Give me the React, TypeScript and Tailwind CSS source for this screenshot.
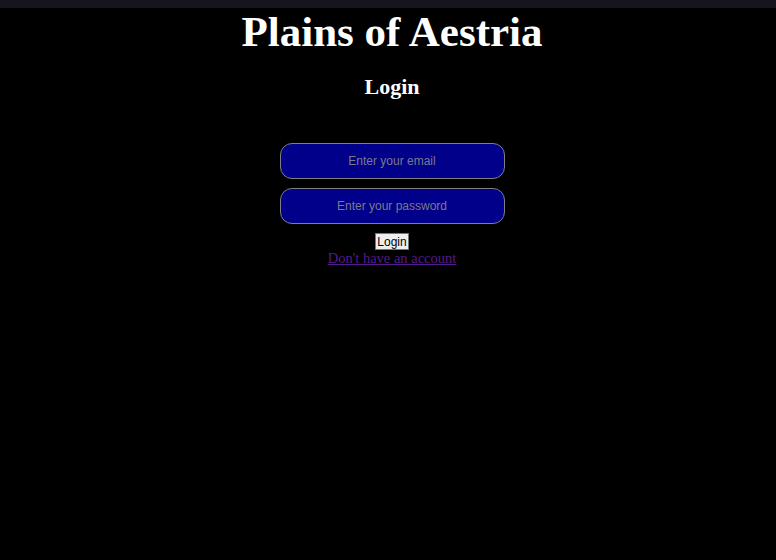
export default function App() {
  return (
    <div className="min-h-[560px] bg-black font-['Liberation_Serif',serif] text-white">
      <div className="h-2 bg-[#15151f]" />
      <div className="flex flex-col items-center pl-2">
        <h1 className="m-0 text-[43px] font-bold leading-[48px]">Plains of Aestria</h1>
        <h2 className="mt-[18px] text-[22px] font-bold leading-[26px]">Login</h2>
        <form className="mt-[43px] flex flex-col items-center" onSubmit={(e) => e.preventDefault()}>
          <input
            type="email"
            placeholder="Enter your email"
            className="h-[36px] w-[225px] rounded-[12px] border border-[#808080] bg-[#00008b] text-center font-['Liberation_Sans',sans-serif] text-[12px] text-white placeholder:text-[#7a7a8a] outline-none"
          />
          <input
            type="password"
            placeholder="Enter your password"
            className="mt-[9px] h-[36px] w-[225px] rounded-[12px] border border-[#808080] bg-[#00008b] text-center font-['Liberation_Sans',sans-serif] text-[12px] text-white placeholder:text-[#7a7a8a] outline-none"
          />
          <button
            type="submit"
            className="mt-[9px] h-[17px] border border-[#767676] bg-[#efefef] px-[1px] font-['Liberation_Sans',sans-serif] text-[12px] leading-[14px] text-black"
          >
            Login
          </button>
        </form>
        <a href="#" className="text-[14.5px] leading-[17px] text-[#551a8b] underline">
          Don't have an account
        </a>
      </div>
    </div>
  );
}
